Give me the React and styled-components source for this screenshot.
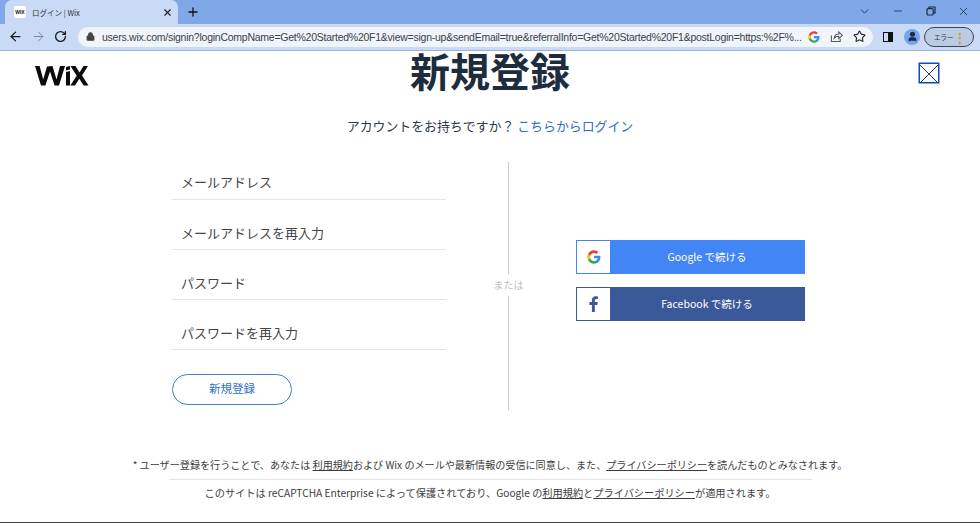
import React from "react";
import styled, { createGlobalStyle } from "styled-components";
import { ArrowLeft, ArrowRight, RotateCw, Lock, Star, Plus, X, Minus, ChevronDown, User } from "lucide-react";

const jp = `"Noto Sans CJK JP", "Noto Sans", sans-serif`;

const Global = createGlobalStyle`
  html, body { margin: 0; padding: 0; background: #fff; }
  body { width: 980px; height: 523px; overflow: hidden; font-family: ${jp}; }
  * { box-sizing: border-box; }
`;

const App = () => (
  <Screen>
    <Global />
    <TabStrip>
      <Tab>
        <Favicon>WIX</Favicon>
        <TabTitle>ログイン | Wix</TabTitle>
        <X size={11} strokeWidth={2.4} color="#222" />
      </Tab>
      <NewTab><Plus size={14} strokeWidth={2.2} color="#111" /></NewTab>
      <WindowButtons>
        <ChevronDown size={13} strokeWidth={1.6} color="#1d2b45" />
        <Minus size={12} strokeWidth={1.6} color="#1d2b45" />
        <svg width="10" height="10" viewBox="0 0 10 10" fill="none" stroke="#1d2b45" strokeWidth="1.2">
          <rect x="1" y="2.6" width="6.2" height="6.4" rx="1" />
          <path d="M3 2.4V1h6v6.2H7.4" />
        </svg>
        <X size={13} strokeWidth={1.5} color="#1d2b45" />
      </WindowButtons>
    </TabStrip>

    <Toolbar>
      <NavIcons>
        <ArrowLeft size={15} strokeWidth={2} color="#1a1a1a" />
        <ArrowRight size={15} strokeWidth={1.6} color="#7b8699" />
        <RotateCw size={13} strokeWidth={2.4} color="#1a1a1a" />
      </NavIcons>
      <Omnibox>
        <LockIcon size={9} strokeWidth={3} color="#444" fill="#444" />
        <Url>users.wix.com/signin?loginCompName=Get%20Started%20F1&amp;view=sign-up&amp;sendEmail=true&amp;referralInfo=Get%20Started%20F1&amp;postLogin=https:%2F%...</Url>
        <GoogleMark size={12} />
        <svg width="13" height="13" viewBox="0 0 14 14" fill="none" stroke="#555" strokeWidth="1.1">
          <path d="M1.500 6v6.500h9.500V9.500" />
          <path d="M4.500 9c.3-3 2.700-4.600 5-4.600V2l3.800 3.700-3.800 3.600V6.800c-2 0-3.800.7-5 2.200z" />
        </svg>
        <Star size={13} strokeWidth={2} color="#222" />
      </Omnibox>
      <SidePanel />
      <Avatar><User size={11} strokeWidth={3} color="#1a2a4a" fill="#1a2a4a" /></Avatar>
      <ErrorPill>エラー<Dots>⋮</Dots></ErrorPill>
    </Toolbar>

    <Page>
      <Header>
        <Logo />
        <Title>新規登録</Title>
        <CloseBox>
          <svg width="18" height="18" viewBox="0 0 18 18" stroke="#2b3a4d" strokeWidth="1">
            <path d="M0 0L18 18M18 0L0 18" />
          </svg>
        </CloseBox>
      </Header>
      <LoginLine>アカウントをお持ちですか？ <LoginLink>こちらからログイン</LoginLink></LoginLine>

      <Columns>
        <FormColumn>
          <Field>メールアドレス</Field>
          <Field>メールアドレスを再入力</Field>
          <Field>パスワード</Field>
          <Field>パスワードを再入力</Field>
          <SubmitButton>新規登録</SubmitButton>
        </FormColumn>
        <Divider><DividerText>または</DividerText></Divider>
        <SocialColumn>
          <SocialButton $color="#4285f4">
            <SocialIcon><GoogleMark size={14} /></SocialIcon>
            <SocialLabel>Google で続ける</SocialLabel>
          </SocialButton>
          <SocialButton $color="#3b5998">
            <SocialIcon>
              <svg width="9" height="16" viewBox="0 0 10 18">
                <path fill="#3b5998" d="M6.500 18V10h2.800l.5-3.200H6.500V5c0-.9.3-1.600 1.700-1.600H10V.5C9.600.4 8.600.3 7.500.3 5 .3 3.200 1.800 3.200 4.600v2.200H.4V10h2.800v8z" />
              </svg>
            </SocialIcon>
            <SocialLabel>Facebook で続ける</SocialLabel>
          </SocialButton>
        </SocialColumn>
      </Columns>

      <Terms $size={10.1}>* ユーザー登録を行うことで、あなたは <u>利用規約</u>および Wix のメールや最新情報の受信に同意し、また、<u>プライバシーポリシー</u>を読んだものとみなされます。</Terms>
      <Rule />
      <Terms $size={10.2}>このサイトは reCAPTCHA Enterprise によって保護されており、Google の<u>利用規約</u>と<u>プライバシーポリシー</u>が適用されます。</Terms>
    </Page>
    <BottomEdge />
  </Screen>
);

export default App;

const GoogleMark = ({ size }) => (
  <svg width={size} height={size} viewBox="0 0 48 48">
    <path fill="#4285f4" d="M46 24.500c0-1.600-.1-3.100-.4-4.500H24v8.500h12.400c-.5 2.900-2.100 5.300-4.500 6.900v5.700h7.300C43.500 36.600 46 31 46 24.500z" />
    <path fill="#34a853" d="M24 47c6.200 0 11.400-2 15.200-5.600l-7.300-5.700c-2 1.400-4.700 2.200-7.900 2.200-6 0-11.100-4.100-12.900-9.500H3.500v5.900C7.300 41.800 15 47 24 47z" />
    <path fill="#fbbc05" d="M11.100 28.400c-.5-1.400-.7-2.900-.7-4.400s.3-3 .7-4.400v-5.900H3.500C2 16.700 1 20.200 1 24s1 7.300 2.500 10.300z" />
    <path fill="#ea4335" d="M24 10.100c3.400 0 6.400 1.200 8.800 3.400l6.500-6.500C35.400 3.400 30.200 1 24 1 15 1 7.300 6.200 3.500 13.700l7.600 5.900c1.800-5.400 6.900-9.500 12.900-9.500z" />
  </svg>
);

// wix logo, drawn by hand from the reference
const Logo = () => (
  <LogoSvg width="54" height="21" viewBox="0 0 54 21" aria-label="Wix">
    <path fill="#0b0b0b" d="M0 1L4.600 1L8.200 14.500L12 1.500L17.500 1L21.500 14.500L25 1L30 1L24 20.500L19.600 20.500L15 6.500L10.400 20.500L6 20.500Z" />
    <path fill="#0b0b0b" d="M31 2L35 1L35 4.500L31 5.500ZM31 7L35 6L35 20.500L31 20.500Z" />
    <path fill="#0b0b0b" d="M35.500 1H40.500L44.500 7.500L48.500 1H53L47 10.500L53.500 20.500H48.600L44.300 13.800L40 20.500H35.300L41.700 10.700Z" />
  </LogoSvg>
);

const Screen = styled.div`
  width: 980px;
  height: 523px;
  display: flex;
  flex-direction: column;
  background: #fff;
`;

const TabStrip = styled.div`
  height: 24px;
  background: #80a8e8;
  display: flex;
  align-items: flex-end;
  padding-left: 5px;
`;

const Tab = styled.div`
  width: 173px;
  height: 24px;
  background: #c9daf7;
  border-radius: 7px 7px 0 0;
  display: flex;
  align-items: center;
  padding: 0 5px 0 9px;
  gap: 6px;
`;

const Favicon = styled.span`
  width: 12px;
  height: 12px;
  background: #fff;
  border-radius: 2px;
  font: bold 5px "Liberation Sans", sans-serif;
  line-height: 12px;
  text-align: center;
  color: #111;
`;

const TabTitle = styled.span`
  flex: 1;
  font-size: 7.5px;
  color: #333;
`;

const NewTab = styled.div`
  width: 14px;
  height: 24px;
  margin-left: 8px;
  display: flex;
  align-items: center;
`;

const WindowButtons = styled.div`
  margin-left: auto;
  width: 122px;
  height: 22px;
  align-self: flex-start;
  display: flex;
  align-items: center;
  justify-content: space-between;
  padding-right: 10px;
`;

const Toolbar = styled.div`
  height: 27px;
  background: #c9daf7;
  border-bottom: 1px solid #9fb2d2;
  display: flex;
  align-items: center;
  padding: 0 0 1px 8px;
`;

const NavIcons = styled.div`
  width: 70px;
  display: flex;
  align-items: center;
  gap: 8px;
`;

const Omnibox = styled.div`
  width: 795px;
  height: 20px;
  background: #f1f4fb;
  border-radius: 10px;
  display: flex;
  align-items: center;
  padding: 0 7px 0 8px;
  gap: 10px;
`;

const LockIcon = styled(Lock)`
  margin-right: -3px;
`;

const Url = styled.span`
  flex: 1;
  min-width: 0;
  font: 10.5px "Liberation Sans", "Open Sans", sans-serif;
  letter-spacing: -0.25px;
  color: #3a3f4a;
  white-space: nowrap;
`;

const SidePanel = styled.span`
  width: 10px;
  height: 10px;
  margin-left: 10px;
  border: 1.5px solid #111;
  border-left-width: 5px;
  transform: scaleX(-1);
`;

const Avatar = styled.span`
  width: 16px;
  height: 16px;
  margin-left: 11px;
  border-radius: 50%;
  background: #7aa3ea;
  display: flex;
  align-items: center;
  justify-content: center;
`;

const ErrorPill = styled.span`
  width: 50px;
  height: 20px;
  margin-left: 4px;
  border: 1px solid #3c4658;
  border-radius: 10px;
  background: #bccbe4;
  font-size: 6.5px;
  color: #333;
  white-space: nowrap;
  display: flex;
  align-items: center;
  padding-left: 9px;
`;

const Dots = styled.span`
  margin-left: auto;
  margin-right: 7px;
  color: #d39b20;
  font-size: 12px;
  font-weight: bold;
`;

const Page = styled.main`
  flex: 1;
  display: flex;
  flex-direction: column;
  align-items: center;
`;

const Header = styled.header`
  width: 100%;
  height: 46px;
  display: grid;
  grid-template-columns: 1fr auto 1fr;
  align-items: start;
  padding: 0 35px;
`;

const LogoSvg = styled.svg`
  margin-top: 14px;
`;

const Title = styled.h1`
  margin: 0;
  font-size: 40px;
  font-weight: 700;
  line-height: 38px;
  color: #1d2d3e;
`;

const CloseBox = styled.div`
  justify-self: end;
  width: 20px;
  height: 20px;
  margin: 12px 6px 0 0;
  border: 1px solid #0b4fb5;
  box-shadow: 0 0 0 0.5px #0b4fb5;
`;

const LoginLine = styled.p`
  margin: 20px 0 0;
  font-size: 12.9px;
  line-height: 18px;
  color: #2f3a45;
`;

const LoginLink = styled.a`
  color: #2f6fc9;
`;

const Columns = styled.section`
  width: 100%;
  height: 248px;
  margin-top: 27px;
  display: grid;
  grid-template-columns: 274px 1fr;
  padding-left: 172px;
  position: relative;
`;

const FormColumn = styled.div`
  display: flex;
  flex-direction: column;
  align-items: flex-start;
`;

const Field = styled.div`
  width: 274px;
  height: 50px;
  padding: 0 0 5px 9px;
  display: flex;
  align-items: flex-end;
  font-size: 13px;
  color: #444;
  border-bottom: 1px solid #e3e5e8;
  line-height: 22px;

  &:first-child {
    height: 38px;
    padding-bottom: 6px;
  }
`;

const SubmitButton = styled.button`
  width: 120px;
  height: 31px;
  margin-top: 24px;
  padding: 0 0 3px;
  background: #fff;
  border: 1px solid #3f7fc4;
  border-radius: 16px;
  font-family: ${jp};
  font-size: 11.5px;
  color: #2f6fc9;
`;

const Divider = styled.div`
  position: absolute;
  left: 508px;
  top: 0;
  bottom: 0;
  width: 1px;
  background: #c9cdd1;
`;

const DividerText = styled.span`
  position: absolute;
  left: -16px;
  top: 112px;
  width: 33px;
  padding: 3px 0;
  background: #fff;
  text-align: center;
  font-size: 10px;
  line-height: 16px;
  color: #c0c0c0;
`;

const SocialColumn = styled.div`
  margin: 78px 0 0 130px;
  display: flex;
  flex-direction: column;
  gap: 13px;
`;

const SocialButton = styled.div`
  width: 229px;
  height: 34px;
  display: flex;
  background: ${(p) => p.$color};
  border: 1px solid ${(p) => p.$color};
`;

const SocialIcon = styled.span`
  width: 33px;
  background: #fff;
  display: flex;
  align-items: center;
  justify-content: center;
`;

const SocialLabel = styled.span`
  flex: 1;
  text-align: center;
  font-size: 10.5px;
  line-height: 32px;
  color: #fff;
`;

const Terms = styled.p`
  margin: 0;
  font-size: ${(p) => p.$size}px;
  line-height: 14px;
  color: #3d3d3d;
  white-space: nowrap;

  ${Columns} + & {
    margin-top: 48px;
  }

  u {
    text-underline-offset: 1px;
  }
`;

const Rule = styled.hr`
  width: 643px;
  height: 1px;
  margin: 7px 0 6px;
  border: 0;
  background: #e4e4e4;
`;

const BottomEdge = styled.div`
  height: 1px;
  background: #444;
`;
